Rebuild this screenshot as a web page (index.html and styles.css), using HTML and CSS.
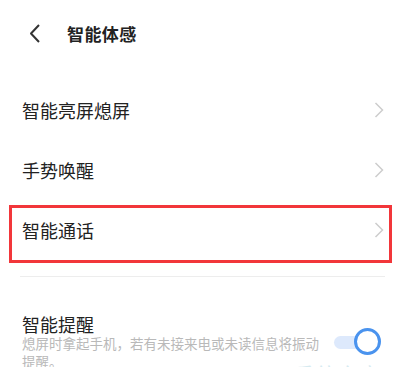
FILE: index.html
```html
<!DOCTYPE html>
<html lang="zh-CN">
<head>
  <meta charset="UTF-8" />
  <meta name="viewport" content="width=device-width, initial-scale=1.0"/>
  <title>智能体感</title>
  <link rel="stylesheet" href="styles.css">
</head>
<body>
  <!-- 顶部栏 -->
  <div class="header">
    <svg class="back" width="12" height="19" viewBox="0 0 12 19">
      <polyline points="10,1 2,9.5 10,18" fill="none" stroke="#333" stroke-width="2" stroke-linejoin="round"/>
    </svg>
    <h1 class="title">智能体感</h1>
  </div>

  <!-- 设置列表 -->
  <div class="list">
    <div class="row">
      <span>智能亮屏熄屏</span>
      <svg class="arrow" width="10" height="16" viewBox="0 0 10 16">
        <polyline points="1.5,1 8.5,8 1.5,15" fill="none" stroke="#cdcdcd" stroke-width="1.5"/>
      </svg>
    </div>
    <div class="row">
      <span>手势唤醒</span>
      <svg class="arrow" width="10" height="16" viewBox="0 0 10 16">
        <polyline points="1.5,1 8.5,8 1.5,15" fill="none" stroke="#cdcdcd" stroke-width="1.5"/>
      </svg>
    </div>
    <div class="row highlight">
      <span>智能通话</span>
      <svg class="arrow" width="10" height="16" viewBox="0 0 10 16">
        <polyline points="1.5,1 8.5,8 1.5,15" fill="none" stroke="#cdcdcd" stroke-width="1.5"/>
      </svg>
    </div>
  </div>

  <div class="divider"></div>

  <div class="switch-row">
    <div class="text">
      <div class="name">智能提醒</div>
      <p class="desc"><span>熄屏时拿起手机，若有未接来电或未读信息将振动提醒。</span></p>
    </div>
    <div class="toggle">
      <div class="track"></div>
      <div class="knob"></div>
    </div>
  </div>

  <div class="watermark">系统之家</div>
</body>
</html>
```

FILE: styles.css
```css
* {
  margin: 0;
  padding: 0;
  box-sizing: border-box;
}

html, body {
  width: 404px;
  height: 367px;
  overflow: hidden;
}

body {
  position: relative;
  background: #fff;
  color: #222;
  font-family: "Noto Sans CJK SC", "Noto Sans", sans-serif;
}

.header {
  height: 67px;
  display: flex;
  align-items: center;
  padding-left: 29px;
}

.back {
  display: block;
}

.title {
  margin-left: 26px;
  font-size: 17px;
  font-weight: 700;
  letter-spacing: 0.4px;
  color: #222;
}

.list {
  margin-top: 13px;
}

.row {
  height: 60px;
  display: flex;
  align-items: center;
  justify-content: space-between;
  padding: 0 20px 0 22px;
  font-size: 18px;
  position: relative;
}

.arrow {
  display: block;
}

.highlight::after {
  content: "";
  position: absolute;
  top: 5px;
  left: 9px;
  right: 12px;
  height: 52px;
  border: 3px solid #f2363a;
}

.divider {
  height: 1px;
  margin: 16px 19px 0 20px;
  background: #ededed;
}

.switch-row {
  display: flex;
  align-items: flex-start;
  justify-content: space-between;
  padding: 37px 23px 0 22px;
}

.name {
  font-size: 18px;
  line-height: 20px;
}

.desc {
  width: 300px;
  font-size: 13.5px;
  line-height: 18px;
  color: #b9b9b9;
}

.toggle {
  position: relative;
  flex: none;
  width: 47px;
  height: 27px;
  margin-top: 14px;
}

.track {
  position: absolute;
  left: 0;
  top: 8px;
  width: 34px;
  height: 13px;
  border-radius: 7px;
  background: #dde9fc;
}

.knob {
  position: absolute;
  right: 0;
  top: 0;
  width: 27px;
  height: 27px;
  border-radius: 50%;
  background: #fff;
  border: 3px solid #4a93ee;
}

.watermark {
  position: absolute;
  left: 294px;
  top: 360px;
  font-size: 20px;
  color: #d6eaf0;
  letter-spacing: 2px;
}
```
